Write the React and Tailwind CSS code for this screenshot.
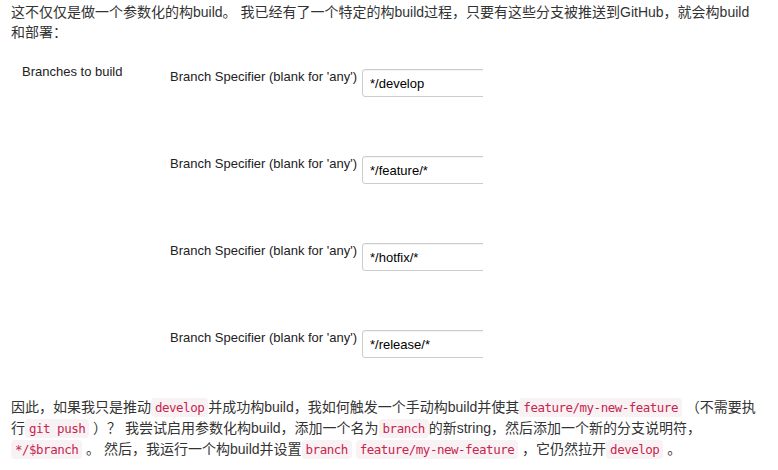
const BRANCHES = ['*/develop', '*/feature/*', '*/hotfix/*', '*/release/*']

function Code({ children }) {
  return (
    <code className="rounded-[4px] bg-[#f9f2f4] px-[4px] py-[2px] font-['DejaVu_Sans_Mono',monospace] text-[12.5px] tracking-[-0.5px] text-[#c7254e]">
      {children}
    </code>
  )
}

export default function App() {
  return (
    <div className="w-[778px] h-[470px] bg-white px-[11px] pt-[2px] font-['Liberation_Sans','Noto_Sans_CJK_SC',sans-serif] text-[14px] leading-[20px] text-[#333]">
      <p className="whitespace-nowrap">
        这不仅仅是做一个参数化的构build。 我已经有了一个特定的构build过程，只要有这些分支被推送到GitHub，就会构build
        <br />
        和部署：
      </p>

      {/* jenkins screenshot */}
      <div className="mt-[13px] flex w-[472px] overflow-hidden font-['Liberation_Sans',sans-serif] text-[13px] leading-[16px] text-[#222]">
        <div className="w-[159px] shrink-0 pl-[11px] pt-[9px]">Branches to build</div>
        <div className="flex flex-col gap-[59px] pt-[14px]">
          {BRANCHES.map(b => (
            <div key={b} className="flex items-start">
              <div className="w-[192px] shrink-0 whitespace-nowrap">Branch Specifier (blank for 'any')</div>
              <div className="h-[28px] w-[140px] shrink-0 rounded-[3px] border border-[#cccccc] bg-white pl-[7px] pt-[1px] leading-[26px] text-black shadow-[inset_0_1px_1px_rgba(0,0,0,0.05)]">
                {b}
              </div>
            </div>
          ))}
        </div>
      </div>

      <div className="mt-[39px] whitespace-nowrap">
        <div>
          因此，如果我只是推动<Code>develop</Code>并成功构build，我如何触发一个手动构build并使其<Code>feature/my-new-feature</Code> （不需要执
        </div>
        <div>
          行<Code>git push</Code> ）？ 我尝试启用参数化构build，添加一个名为<Code>branch</Code>的新string，然后添加一个新的分支说明符，
        </div>
        <div>
          <Code>*/$branch</Code> 。 然后，我运行一个构build并设置<Code>branch</Code> <Code>feature/my-new-feature</Code> ，它仍然拉开<Code>develop</Code> 。
        </div>
      </div>
    </div>
  )
}
